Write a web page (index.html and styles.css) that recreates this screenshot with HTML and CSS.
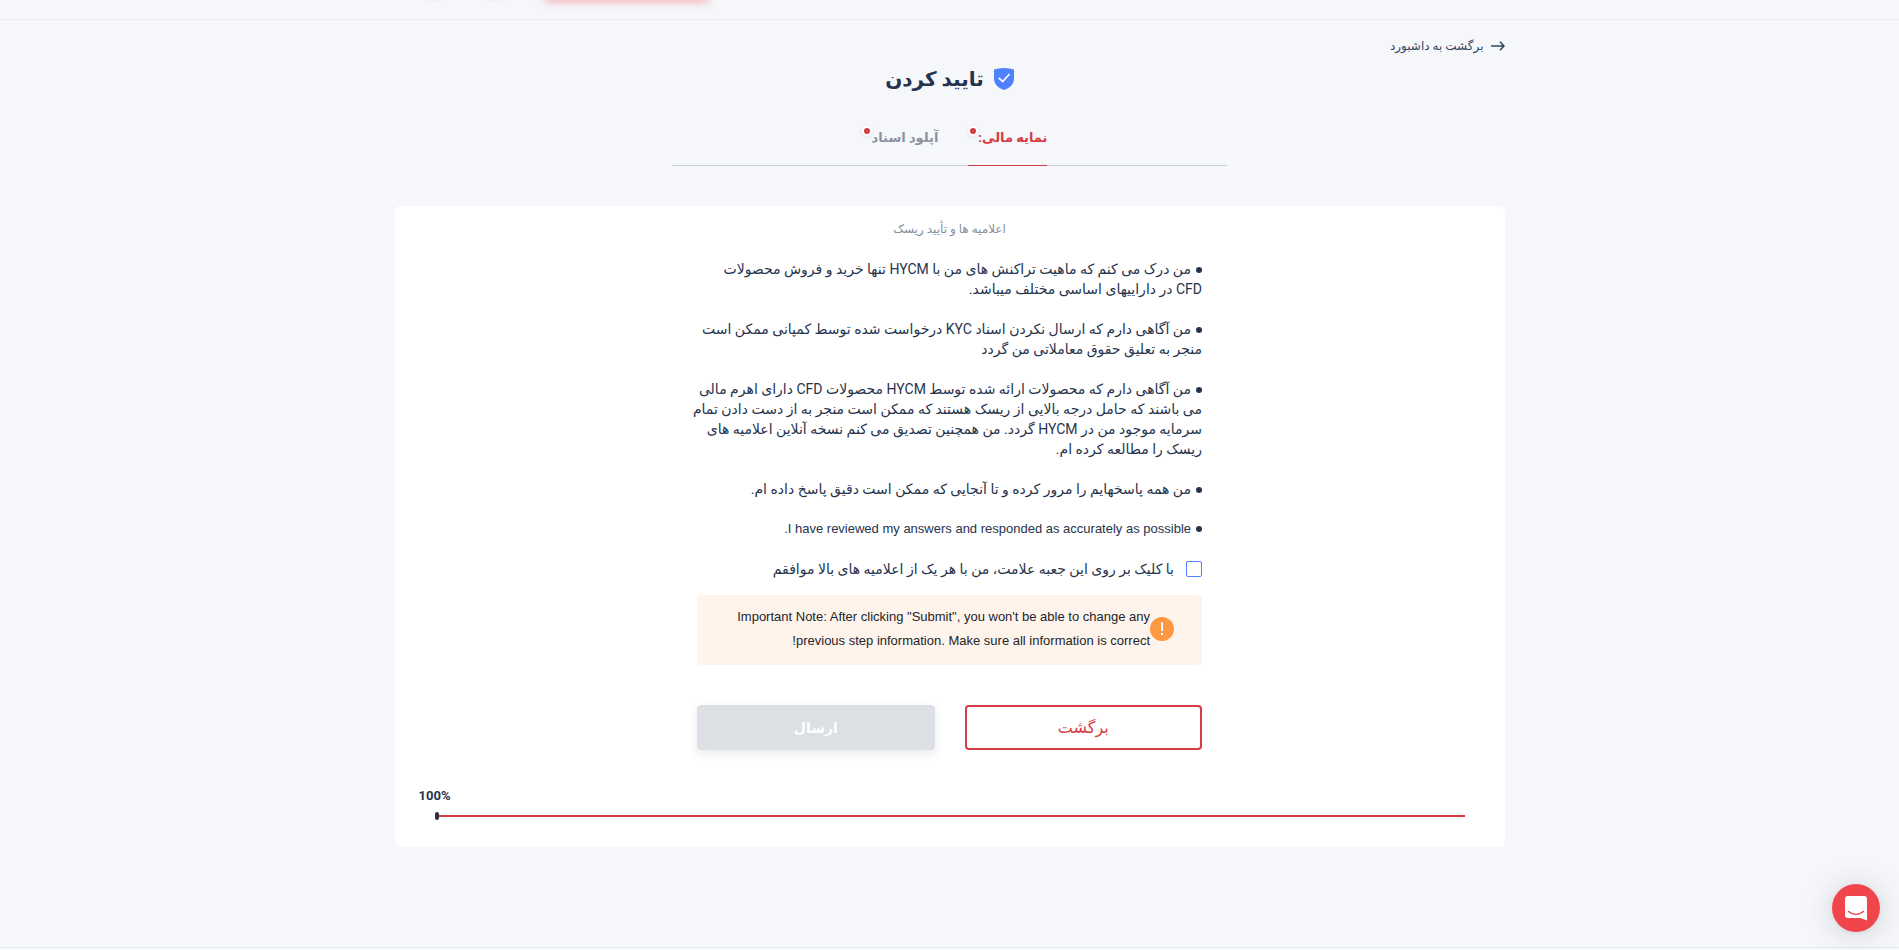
FILE: index.html
```html
<!DOCTYPE html>
<html lang="fa" dir="rtl">
<head>
    <meta charset="UTF-8">
    <meta name="viewport" content="width=device-width, initial-scale=1.0">
    <title>تایید کردن</title>
    <link rel="stylesheet" href="styles.css">
</head>
<body>
    <header class="header">
        <div class="container header-inner">
            <span class="header-cta"></span>
            <span class="header-icon"></span>
            <span class="header-icon"></span>
        </div>
    </header>

    <main class="container">
        <a href="#" class="back-link">
            <svg width="14" height="10" viewBox="0 0 14 10" fill="none" stroke="#33475b" stroke-width="1.600">
                <path d="M0 5h13M9 .7L13 5L9 9.300"/>
            </svg>
            برگشت به داشبورد
        </a>

        <h1 class="title">
            <svg width="20" height="22" viewBox="0 0 20 22">
                <path d="M0 1.500Q5 0 10 0T20 1.500V10.500C20 16 15.500 20.500 10 22C4.500 20.500 0 16 0 10.500Z" fill="#4f80ff"/>
                <path d="M4.800 9.800L8.700 13.600L15.600 6" fill="none" stroke="#fff" stroke-width="1.700"/>
            </svg>
            تایید کردن
        </h1>

        <nav class="tabs">
            <a href="#" class="tab active">نمایه مالی:<span class="dot"></span></a>
            <a href="#" class="tab">آپلود اسناد<span class="dot"></span></a>
        </nav>

        <section class="card">
            <h2 class="card-title">اعلامیه ها و تأیید ریسک</h2>

            <form class="form">
                <p class="statement"><span class="bullet"></span>من درک می کنم که ماهیت تراکنش های من با HYCM تنها خرید و فروش محصولات<br>CFD در داراییهای اساسی مختلف میباشد.</p>
                <p class="statement"><span class="bullet"></span>من آگاهی دارم که ارسال نکردن اسناد KYC درخواست شده توسط کمپانی ممکن است<br>منجر به تعلیق حقوق معاملاتی من گردد</p>
                <p class="statement"><span class="bullet"></span>من آگاهی دارم که محصولات ارائه شده توسط HYCM محصولات CFD دارای اهرم مالی<br>می باشند که حامل درجه بالایی از ریسک هستند که ممکن است منجر به از دست دادن تمام<br>سرمایه موجود من در HYCM گردد. من همچنین تصدیق می کنم نسخه آنلاین اعلامیه های<br>ریسک را مطالعه کرده ام.</p>
                <p class="statement"><span class="bullet"></span>من همه پاسخهایم را مرور کرده و تا آنجایی که ممکن است دقیق پاسخ داده ام.</p>
                <p class="statement latin"><span class="bullet"></span>I have reviewed my answers and responded as accurately as possible.</p>

                <div class="agree">
                    <input type="checkbox" id="agree">
                    <label for="agree">با کلیک بر روی این جعبه علامت، من با هر یک از اعلامیه های بالا موافقم</label>
                </div>

                <div class="note latin">
                    <svg width="24" height="24" viewBox="0 0 24 24">
                        <circle cx="12" cy="12" r="12" fill="#ff9843"/>
                        <path d="M12 5.500V14M12 16V18" stroke="#fff" stroke-width="2"/>
                    </svg>
                    <p>Important Note: After clicking "Submit", you won't be able to change any<br>previous step information. Make sure all information is correct!</p>
                </div>

                <div class="actions">
                    <button type="button" class="btn btn-outline">برگشت</button>
                    <button type="submit" class="btn btn-submit" disabled>ارسال</button>
                </div>
            </form>

            <div class="progress">
                <span class="progress-label" id="progressLabel">100%</span>
                <div class="progress-bar" role="progressbar" aria-valuenow="100" aria-labelledby="progressLabel">
                    <div class="progress-fill" style="width: 100%"></div>
                    <span class="progress-thumb"></span>
                </div>
            </div>
        </section>
    </main>

    <footer class="footer"></footer>

    <button type="button" class="chat" aria-label="Chat">
        <svg width="22" height="25" viewBox="0 0 22 25">
            <path d="M3 0H19Q22 0 22 3V24.500L15.500 22H3Q0 22 0 19V3Q0 0 3 0Z" fill="#fff"/>
            <path d="M3.500 15.500Q11 21.500 18.500 15.500" fill="none" stroke="#ef454b" stroke-width="1.600" stroke-linecap="round"/>
        </svg>
    </button>
</body>
</html>
```
FILE: styles.css
```css
* {
    box-sizing: border-box;
}
body {
    margin: 0;
    min-height: 100vh;
    display: flex;
    flex-direction: column;
    background: #f5f7fb;
    color: #26334d;
    font-family: Roboto, "DejaVu Sans", sans-serif;
    font-size: 14px;
    line-height: 20px;
}
a {
    color: inherit;
    text-decoration: none;
}
.container {
    width: 100%;
    max-width: 1110px;
    margin: 0 auto;
}
.latin {
    font-family: "Liberation Sans", Arial, sans-serif;
    font-size: 13px;
}
.header {
    height: 20px;
    border-bottom: 1px solid #eceef2;
    overflow: hidden;
}
.header-inner {
    position: relative;
    display: flex;
    justify-content: flex-end;
    gap: 40px;
    padding-left: 30px;
    transform: translateY(-44px);
}
.header-cta {
    width: 164px;
    height: 40px;
    border-radius: 4px;
    box-shadow: 0 6px 10px rgba(239, 69, 75, 0.4);
}
.header-icon {
    width: 20px;
    height: 40px;
    border-radius: 10px;
    box-shadow: 0 2px 6px rgba(38, 51, 77, 0.2);
}

.back-link {
    display: flex;
    align-items: center;
    gap: 7px;
    width: fit-content;
    margin-top: 16px;
    color: #33475b;
    font-size: 12px;
}
.title {
    display: flex;
    justify-content: center;
    align-items: center;
    gap: 10px;
    margin: 7px 0 0;
    font-size: 20px;
    line-height: 32px;
}
.tabs {
    display: flex;
    justify-content: center;
    gap: 30px;
    width: 50%;
    margin: 0 auto 40px;
    padding: 30px 0 0 10px;
    border-bottom: 1px solid #c9ced6;
}
.tab {
    position: relative;
    height: 41px;
    margin-bottom: -1px;
    padding: 3px 0 0 10px;
    color: #8b93a0;
    font-size: 13px;
    font-weight: bold;
}
.tab.active {
    color: #d63c43;
    border-bottom: 1px solid #d63c43;
}
.dot {
    position: absolute;
    top: 1px;
    left: 0;
    width: 10px;
    height: 10px;
    border: 2px solid #fff;
    border-radius: 50%;
    background: #d63c43;
    box-shadow: 0 1px 4px rgba(38, 51, 77, 0.1);
}

.card {
    padding: 13px 40px 29px;
    border-radius: 6px;
    background: #fff;
}
.card-title {
    margin: 0 0 20px;
    color: #868e9a;
    font-size: 12px;
    font-weight: normal;
    text-align: center;
}
.form {
    width: 505px;
    max-width: 100%;
    margin: 0 auto;
}
.statement {
    margin: 0 0 20px;
    white-space: nowrap;
}
.bullet {
    display: inline-block;
    width: 6px;
    height: 6px;
    margin-left: 5px;
    border-radius: 50%;
    background: #26334d;
    vertical-align: 1px;
}
.agree {
    display: flex;
    align-items: center;
    gap: 12px;
    margin-bottom: 16px;
    white-space: nowrap;
}
.agree input {
    appearance: none;
    width: 16px;
    height: 16px;
    margin: 0;
    border: 1px solid #4f80ff;
    border-radius: 2px;
    background: #fff;
}
.note {
    display: flex;
    align-items: center;
    min-height: 70px;
    padding: 10px 28px 12px;
    border-radius: 4px;
    background: #fff4ec;
    color: #212529;
    line-height: 24px;
    white-space: nowrap;
}
.note p {
    margin: 0;
}
.note svg {
    flex: none;
}
.actions {
    display: flex;
    gap: 30px;
    margin: 40px 0 36px;
}
.btn {
    flex: 1;
    height: 45px;
    padding: 0;
    border: 2px solid #d63c43;
    border-radius: 4px;
    background: #fff;
    color: #d63c43;
    font-family: inherit;
    font-size: 16px;
    cursor: pointer;
}
.btn-submit {
    border-color: #dcdfe4;
    background: #dcdfe4;
    color: #fff;
    font-size: 14px;
    font-weight: bold;
    box-shadow: 0 4px 10px rgba(38, 51, 77, 0.1);
    cursor: default;
}
.progress {
    direction: ltr;
}
.progress-label {
    display: block;
    width: 40px;
    margin-left: -20px;
    font-size: 13px;
    font-weight: bold;
    text-align: center;
}
.progress-bar {
    position: relative;
    margin: 9px 0 1px;
}
.progress-fill {
    height: 2px;
    background: #d63c43;
}
.progress-thumb {
    position: absolute;
    top: -3px;
    left: 0;
    width: 4px;
    height: 8px;
    border-radius: 2px;
    background: #26334d;
}

.footer {
    height: 3px;
    margin-top: auto;
    border-top: 1px solid #e4e7ec;
}
.chat {
    position: fixed;
    right: 19px;
    bottom: 18px;
    display: flex;
    justify-content: center;
    align-items: center;
    width: 48px;
    height: 48px;
    padding: 0;
    border: 0;
    border-radius: 50%;
    background: #ef454b;
    box-shadow: 0 1px 6px rgba(0, 0, 0, 0.06), 0 2px 32px rgba(0, 0, 0, 0.16);
    cursor: pointer;
}
```
